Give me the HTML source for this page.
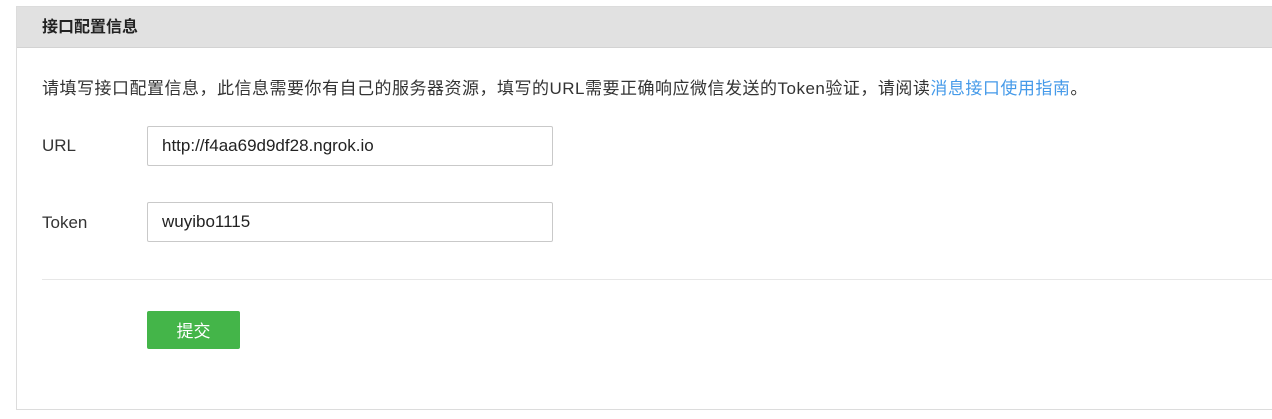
<!DOCTYPE html>
<html><head><meta charset="utf-8"><style>
body{margin:0;width:1272px;height:419px;background:#fff;font-family:"Liberation Sans","Noto Sans CJK SC",sans-serif;overflow:hidden;position:relative}
.panel{position:absolute;left:16px;top:6px;width:1270px;height:404px;border:1px solid #dcdcdc;border-right:none;box-sizing:border-box}
.hd{height:41px;background:#e1e1e1;border-bottom:1px solid #d3d3d3;box-sizing:border-box;padding-left:25px;line-height:42px;font-size:16px;font-weight:bold;color:#222}
.t{position:absolute;font-size:17px;color:#333;line-height:20px}
.in{position:absolute;left:130px;width:406px;height:40px;border:1px solid #c9c9c9;border-radius:2px;box-sizing:border-box;padding-left:14px;line-height:38px;font-size:17px;color:#222}
a{color:#459ae9;text-decoration:none}
.line{position:absolute;left:25px;right:0;top:272px;border-top:1px solid #e7e7e7}
.btn{position:absolute;left:130px;top:304px;width:93px;height:38px;background:#44b549;border-radius:2px;color:#fff;font-size:17px;text-align:center;line-height:41px}
</style></head><body>
<div class="panel">
<div class="hd">接口配置信息</div>
<div class="t" style="left:25px;top:72px;letter-spacing:0.5px">请填写接口配置信息，此信息需要你有自己的服务器资源，填写的URL需要正确响应微信发送的Token验证，请阅读<a>消息接口使用指南</a>。</div>
<div class="t" style="left:25px;top:129px">URL</div>
<div class="in" style="top:119px">http://f4aa69d9df28.ngrok.io</div>
<div class="t" style="left:25px;top:206px">Token</div>
<div class="in" style="top:195px">wuyibo1115</div>
<div class="line"></div>
<div class="btn">提交</div>
</div>
</body></html>
